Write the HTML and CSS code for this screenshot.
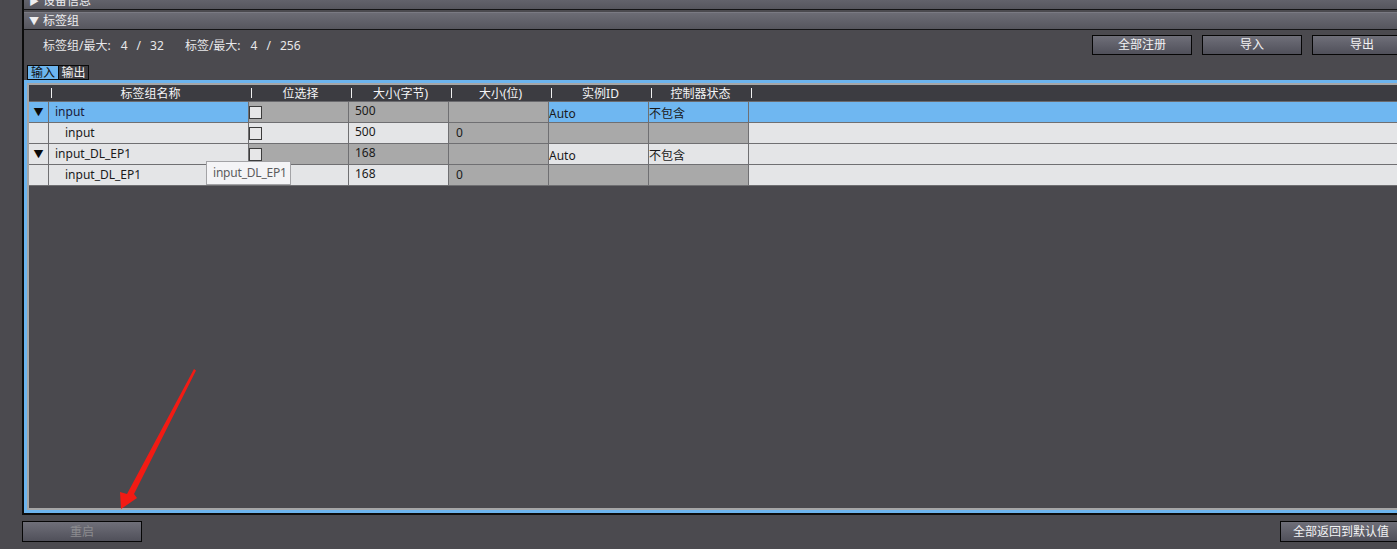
FILE: index.html
```html
<!DOCTYPE html>
<html lang="zh-CN">
<head>
    <meta charset="UTF-8">
    <title>标签组</title>
    <link rel="stylesheet" href="styles.css">
</head>
<body>
    <div class="page">
        <div class="panel">
            <div class="sect sect-cut"><span class="tri">▶</span>设备信息</div>
            <div class="sect"><span class="tri">▼</span>标签组</div>

            <div class="info-row">
                <div class="counts">
                    <span class="lbl">标签组/最大:</span><span class="n">4</span><span class="sl">/</span><span class="n">32</span>
                    <span class="lbl lbl2">标签/最大:</span><span class="n">4</span><span class="sl">/</span><span class="n">256</span>
                </div>
                <div class="actions">
                    <button class="btn">全部注册</button>
                    <button class="btn">导入</button>
                    <button class="btn">导出</button>
                </div>
            </div>

            <div class="tabs">
                <div class="tab active">输入</div>
                <div class="tab">输出</div>
            </div>

            <div class="frame">
                <div class="grid head">
                    <div class="hc"></div>
                    <div class="hc"><span class="sep"></span><span class="ht">标签组名称</span></div>
                    <div class="hc"><span class="sep"></span><span class="ht">位选择</span></div>
                    <div class="hc"><span class="sep"></span><span class="ht">大小(字节)</span></div>
                    <div class="hc"><span class="sep"></span><span class="ht">大小(位)</span></div>
                    <div class="hc"><span class="sep"></span><span class="ht">实例ID</span></div>
                    <div class="hc"><span class="sep"></span><span class="ht">控制器状态</span></div>
                    <div class="hc"><span class="sep"></span></div>
                </div>

                <!-- 组 input -->
                <div class="grid row">
                    <div class="c sel arrow">▼</div>
                    <div class="c sel name first">input</div>
                    <div class="c dim"><span class="chk"></span></div>
                    <div class="c dim num">500</div>
                    <div class="c dim"></div>
                    <div class="c sel flat lo">Auto</div>
                    <div class="c sel flat lo">不包含</div>
                    <div class="c sel"></div>
                </div>
                <div class="grid row">
                    <div class="c"></div>
                    <div class="c name sub">input</div>
                    <div class="c"><span class="chk"></span></div>
                    <div class="c num">500</div>
                    <div class="c dim bit">0</div>
                    <div class="c dim"></div>
                    <div class="c dim"></div>
                    <div class="c"></div>
                </div>

                <!-- 组 input_DL_EP1 -->
                <div class="grid row">
                    <div class="c arrow">▼</div>
                    <div class="c name">input_DL_EP1</div>
                    <div class="c dim"><span class="chk"></span></div>
                    <div class="c dim num">168</div>
                    <div class="c dim"></div>
                    <div class="c flat lo">Auto</div>
                    <div class="c flat lo">不包含</div>
                    <div class="c"></div>
                </div>
                <div class="grid row">
                    <div class="c"></div>
                    <div class="c name sub">input_DL_EP1</div>
                    <div class="c"></div>
                    <div class="c num">168</div>
                    <div class="c dim bit">0</div>
                    <div class="c dim"></div>
                    <div class="c dim"></div>
                    <div class="c"></div>
                </div>

                <div class="tooltip">input_DL_EP1</div>
            </div>
        </div>

        <div class="bottom-bar">
            <button class="btn btn-wide" disabled>重启</button>
            <button class="btn btn-reset">全部返回到默认值</button>
        </div>
    </div>

    <svg class="annot" width="1397" height="549" viewBox="0 0 1397 549">
        <polygon fill="#f21b14" points="194,369 196,370.5 134,494 137,498 121,509 120,492 127,494"/>
    </svg>
</body>
</html>
```

FILE: styles.css
```css
body {
    margin: 0;
    background: #4b4a4f;
    font-family: "Noto Sans", "Noto Sans CJK SC", sans-serif;
    font-size: 12px;
    color: #e8e8ea;
    overflow: hidden;
    position: relative;
    height: 549px;
}
.page {
    width: 1400px;
    padding-left: 22px;
}
.panel {
    border-left: 2px solid #0c0c0c;
    border-bottom: 2px solid #0c0c0c;
    height: 515px;
    box-sizing: border-box;
    display: flex;
    flex-direction: column;
}
.sect {
    height: 18px;
    box-sizing: border-box;
    border-top: 1px solid #7a7a83;
    border-bottom: 1px solid #141416;
    background: linear-gradient(#6c6c75, #56565e);
    display: flex;
    align-items: center;
    padding-left: 5px;
    line-height: 16px;
    color: #eeeef0;
}
.sect-cut {
    margin-top: -8px;
    margin-bottom: 2px;
}
.tri {
    font-size: 10px;
    margin-right: 4px;
}
.info-row {
    height: 30px;
    display: flex;
    align-items: center;
    justify-content: space-between;
    padding: 0 10px 0 19px;
}
.counts .lbl2 {
    margin-left: 18px;
}
.counts .n {
    margin-left: 10px;
}
.counts .sl {
    margin-left: 9px;
}
.counts .sl + .n {
    margin-left: 9px;
}
.actions {
    display: flex;
    gap: 10px;
}
.btn {
    font-family: inherit;
    font-size: 12px;
    width: 100px;
    height: 20px;
    padding: 0;
    border: 1px solid #060606;
    background: linear-gradient(#6f6f79, #50505a);
    color: #f2f2f4;
    line-height: 18px;
}
.tabs {
    display: flex;
    margin: 5px 0 0 3px;
}
.tab {
    height: 15px;
    box-sizing: border-box;
    width: 31px;
    border: 1px solid #0a0a0a;
    background: #3c3c41;
    color: #f0f0f0;
    line-height: 13px;
    text-align: center;
}
.tab.active {
    background: #6cb5ef;
    color: #101010;
    border-right: none;
}
.frame {
    position: relative;
    height: 433px;
    box-sizing: border-box;
    border: 3px solid #6cb4ee;
    box-shadow: inset 0 0 0 2px #a6a6a6;
    padding: 2px;
    background: #4a494e;
}
.grid {
    display: grid;
    grid-template-columns: 20px 200px 100px 100px 100px 100px 100px 1fr;
}
.head {
    height: 17px;
    background: #3c3c41;
    border-bottom: 1px solid #6a6a6e;
    box-sizing: border-box;
}
.hc {
    display: flex;
    align-items: center;
    color: #f4f4f6;
}
.sep {
    width: 1px;
    height: 10px;
    background: #f0f0f0;
    margin-left: 2px;
}
.ht {
    flex: 1;
    text-align: center;
    line-height: 15px;
}
.c {
    height: 21px;
    box-sizing: border-box;
    border-right: 1px solid #6f6f72;
    border-bottom: 1px solid #6f6f72;
    background: #e4e5e7;
    color: #1a1a1a;
    line-height: 20px;
    white-space: nowrap;
    overflow: hidden;
}
.c.sel {
    background: #6fb7f1;
}
.c.dim {
    background: #a9a9a9;
}
.arrow {
    font-size: 10px;
    text-align: center;
    color: #0a0a0a;
}
.name {
    padding-left: 6px;
}
.name.first {
    color: #1a1a3a;
}
.name.sub {
    padding-left: 16px;
}
.num {
    padding-left: 6px;
    line-height: 18px;
}
.bit {
    padding-left: 7px;
}
.flat {
    padding-left: 0;
}
.lo {
    line-height: 23px;
}
.chk {
    display: block;
    width: 13px;
    height: 13px;
    box-sizing: border-box;
    border: 1px solid #3c3c3c;
    background: #e7e7e8;
    margin-top: 4px;
}
.tooltip {
    position: absolute;
    left: 179px;
    top: 78px;
    width: 85px;
    height: 24px;
    box-sizing: border-box;
    background: #f4f4f6;
    border: 1px solid #a3a3a6;
    color: #5c5c5e;
    padding-left: 6px;
    line-height: 22px;
    letter-spacing: -0.2px;
    white-space: nowrap;
}
.bottom-bar {
    display: flex;
    padding-top: 6px;
}
.btn-wide {
    width: 120px;
    height: 21px;
    color: #8c8c90;
}
.btn-reset {
    margin-left: auto;
    margin-right: 17px;
    width: 125px;
    height: 21px;
    text-align: left;
    padding-left: 12px;
}
.annot {
    position: absolute;
    left: 0;
    top: 0;
    pointer-events: none;
}
```
